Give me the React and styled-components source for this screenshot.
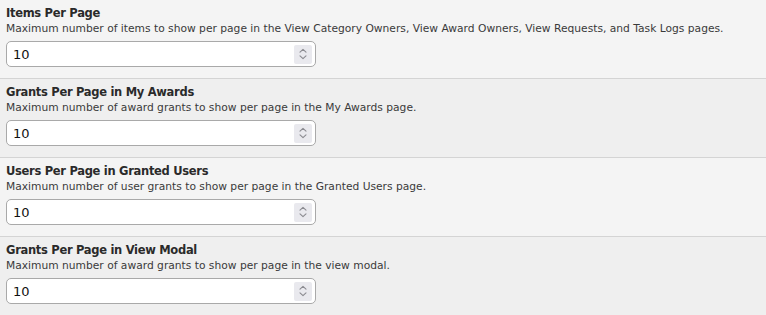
import React from "react";
import styled, { createGlobalStyle } from "styled-components";

const Global = createGlobalStyle`
  html, body { margin: 0; padding: 0; background: #f4f4f4; }
  body { font-family: "DejaVu Sans", Verdana, sans-serif; }
`;

const List = styled.div`
  display: flex;
  flex-direction: column;
  width: 766px;
`;

const Row = styled.section`
  box-sizing: border-box;
  height: ${(p) => (p.$last ? "78px" : "79px")};
  padding: 6px 6px 0;
  background: ${(p) => (p.$alt ? "#efefef" : "#f4f4f4")};
  border-bottom: ${(p) => (p.$last ? "none" : "1px solid #d4d4d4")};
  display: flex;
  flex-direction: column;
`;

const Title = styled.div`
  font-size: 11.5px;
  font-weight: bold;
  letter-spacing: -0.3px;
  line-height: 15px;
  color: #2a2a2a;
`;

const Desc = styled.div`
  font-size: 10.7px;
  line-height: 15px;
  color: #3a3a3a;
  margin-bottom: 5px;
`;

const Field = styled.div`
  box-sizing: border-box;
  width: 310px;
  height: 26px;
  background: #fff;
  border: 1px solid #a9a9a9;
  border-radius: 5px;
  display: flex;
  align-items: center;
  padding: 0 3px 0 6px;
`;

const Value = styled.span`
  flex: 1;
  font-size: 13px;
  color: #111;
`;

const Spinner = styled.div`
  width: 18px;
  height: 19px;
  background: #e9e9ee;
  border-radius: 2px;
  display: flex;
  align-items: center;
  justify-content: center;
`;

const Arrows = () => (
  <svg width="10" height="14" viewBox="0 0 10 14" fill="none" stroke="#8a8a90" strokeWidth="1.1" strokeLinecap="round" strokeLinejoin="round">
    <path d="M2 5.2 L5 2.4 L8 5.2" />
    <path d="M2 8.8 L5 11.6 L8 8.8" />
  </svg>
);

const settings = [
  {
    title: "Items Per Page",
    desc: "Maximum number of items to show per page in the View Category Owners, View Award Owners, View Requests, and Task Logs pages.",
  },
  {
    title: "Grants Per Page in My Awards",
    desc: "Maximum number of award grants to show per page in the My Awards page.",
  },
  {
    title: "Users Per Page in Granted Users",
    desc: "Maximum number of user grants to show per page in the Granted Users page.",
  },
  {
    title: "Grants Per Page in View Modal",
    desc: "Maximum number of award grants to show per page in the view modal.",
  },
];

export default function App() {
  return (
    <>
      <Global />
      <List>
        {settings.map((s, i) => (
          <Row key={s.title} $alt={i % 2 === 1} $last={i === settings.length - 1}>
            <Title>{s.title}</Title>
            <Desc>{s.desc}</Desc>
            <Field>
              <Value>10</Value>
              <Spinner>
                <Arrows />
              </Spinner>
            </Field>
          </Row>
        ))}
      </List>
    </>
  );
}
